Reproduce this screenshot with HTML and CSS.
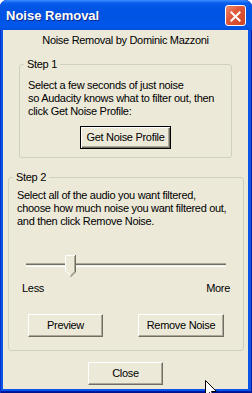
FILE: index.html
```html
<!DOCTYPE html>
<html>
<head>
<meta charset="utf-8">
<title>Noise Removal</title>
<link rel="stylesheet" href="styles.css">
</head>
<body>
<div class="window">
  <div class="titlebar">
    <span class="title">Noise Removal</span>
    <span class="close-x">
      <svg width="21" height="21" viewBox="0 0 21 21">
        <path d="M6 6 L15 15 M15 6 L6 15" stroke="#fff" stroke-width="2.2" stroke-linecap="square"/>
      </svg>
    </span>
  </div>
  <div class="client">
    <div class="credit">Noise Removal by Dominic Mazzoni</div>

    <fieldset class="group step1">
      <legend>Step 1</legend>
      <div class="group-body">
        <p>Select a few seconds of just noise<br>so Audacity knows what to filter out, then<br>click Get Noise Profile:</p>
        <button class="btn default profile">Get Noise Profile</button>
      </div>
    </fieldset>

    <fieldset class="group step2">
      <legend>Step 2</legend>
      <div class="group-body">
        <p>Select all of the audio you want filtered,<br>choose how much noise you want filtered out,<br>and then click Remove Noise.</p>
        <div class="slider">
          <div class="track"></div>
          <svg class="thumb" style="left: 48px" width="12" height="23" viewBox="0 0 12 23">
            <polygon points="0,0 11,0 11,17 5.5,22.5 0,17" fill="#ECE9D8"/>
            <polyline points="0.5,17 0.5,0.5 10,0.5" fill="none" stroke="#fff"/>
            <polyline points="1.5,16.5 5.5,20.5" fill="none" stroke="#fff"/>
            <polyline points="9.5,1 9.5,16.5 5.5,20.5" fill="none" stroke="#ACA899"/>
            <polyline points="10.5,0 10.5,17 5.5,22" fill="none" stroke="#716F64"/>
          </svg>
        </div>
        <div class="scale">
          <span>Less</span>
          <span>More</span>
        </div>
        <div class="actions">
          <button class="btn preview">Preview</button>
          <button class="btn remove">Remove Noise</button>
        </div>
      </div>
    </fieldset>

    <button class="btn closebtn">Close</button>
  </div>

  <svg class="cursor" width="13" height="20" viewBox="0 0 13 20">
    <path d="M0.5 0.5 L0.5 16.5 L4.5 12.5 L7.5 18.5 L9.5 17.5 L6.5 11.5 L11.5 11.5 Z" fill="#fff" stroke="#000"/>
  </svg>
</div>
</body>
</html>
```

FILE: styles.css
```css
body{margin:0; font-family:"Liberation Sans", Arial, sans-serif; font-size:11px; line-height:13px; color:#000; background:#fff}

/* window frame */
.window{width:252px; height:393px; position:relative; overflow:hidden;
  display:flex; flex-direction:column;
  background:#0A55E8;
  border-radius:7px 7px 0 0;
  box-shadow:inset 1px 0 #0831C8, inset -1px 0 #0020A8, inset 0 -1px #00138C, inset 0 -2px #0019A8;
}
.titlebar{height:30px; flex:none; display:flex; align-items:center; justify-content:space-between;
  padding:0 6px 0 6px;
  background:linear-gradient(to bottom, #3C8EFF 0, #0A5DEB 3px, #0055E6 8px, #0053E3 60%, #0057EA 85%, #0050DF 100%);
  border-radius:7px 7px 0 0;
}
.title{color:#fff; font-weight:bold; font-size:13px; text-shadow:1px 1px #0A2A8A; padding-top:1px}
.close-x{width:21px; height:21px; box-sizing:border-box; border:1px solid #fff; border-radius:3px;
  background:linear-gradient(135deg, #EC8A6C 0, #E2583A 40%, #CC4424 100%);
  display:flex; margin-top:1px}

/* dialog area */
.client{flex:1; margin:0 4px 4px 3px; background:#ECE9D8; display:flex; flex-direction:column;
  letter-spacing:-0.3px; white-space:nowrap}
.credit{text-align:center; padding-top:4px}

.group{margin:0; padding:8px; border:1px solid #D0D0BF; border-radius:3px; box-sizing:border-box; min-width:0}
.group legend{padding:0 3px; margin-left:-4px}
.group p{margin:0}
.group-body{display:flex; flex-direction:column}

.step1{width:213px; margin:11px 0 0 16px}
.step2{width:236px; margin:13px 0 0 5px; padding:5px 8px 13px 8px}

/* buttons */
.btn{font:inherit; letter-spacing:inherit; color:#000; height:23px; padding:0; background:#ECE9D8;
  border:1px solid; border-color:#fff #716F64 #716F64 #fff;
  box-shadow:inset -1px -1px #ACA899;
}
.btn.default{border-color:#000; box-shadow:inset 1px 1px #fff, inset -1px -1px #716F64, inset -2px -2px #ACA899}
.profile{width:91px; align-self:center; margin-top:8px}
.preview{width:75px}
.remove{width:86px}
.closebtn{width:75px; align-self:center; margin-top:11px}

/* slider */
.slider{position:relative; height:23px; margin-top:27px}
.track{height:2px; margin:8px 9px 0 9px; border-top:1px solid #ACA899; border-bottom:1px solid #fff;
  background:linear-gradient(#716F64 0 1px, #F1EFE2 1px)}
.thumb{position:absolute; top:0}
.scale{display:flex; justify-content:space-between; padding:0 5px; margin-top:4px}
.actions{display:flex; justify-content:space-between; padding:0 11px; margin-top:19px}

.cursor{position:absolute; left:205px; top:380px}
```
